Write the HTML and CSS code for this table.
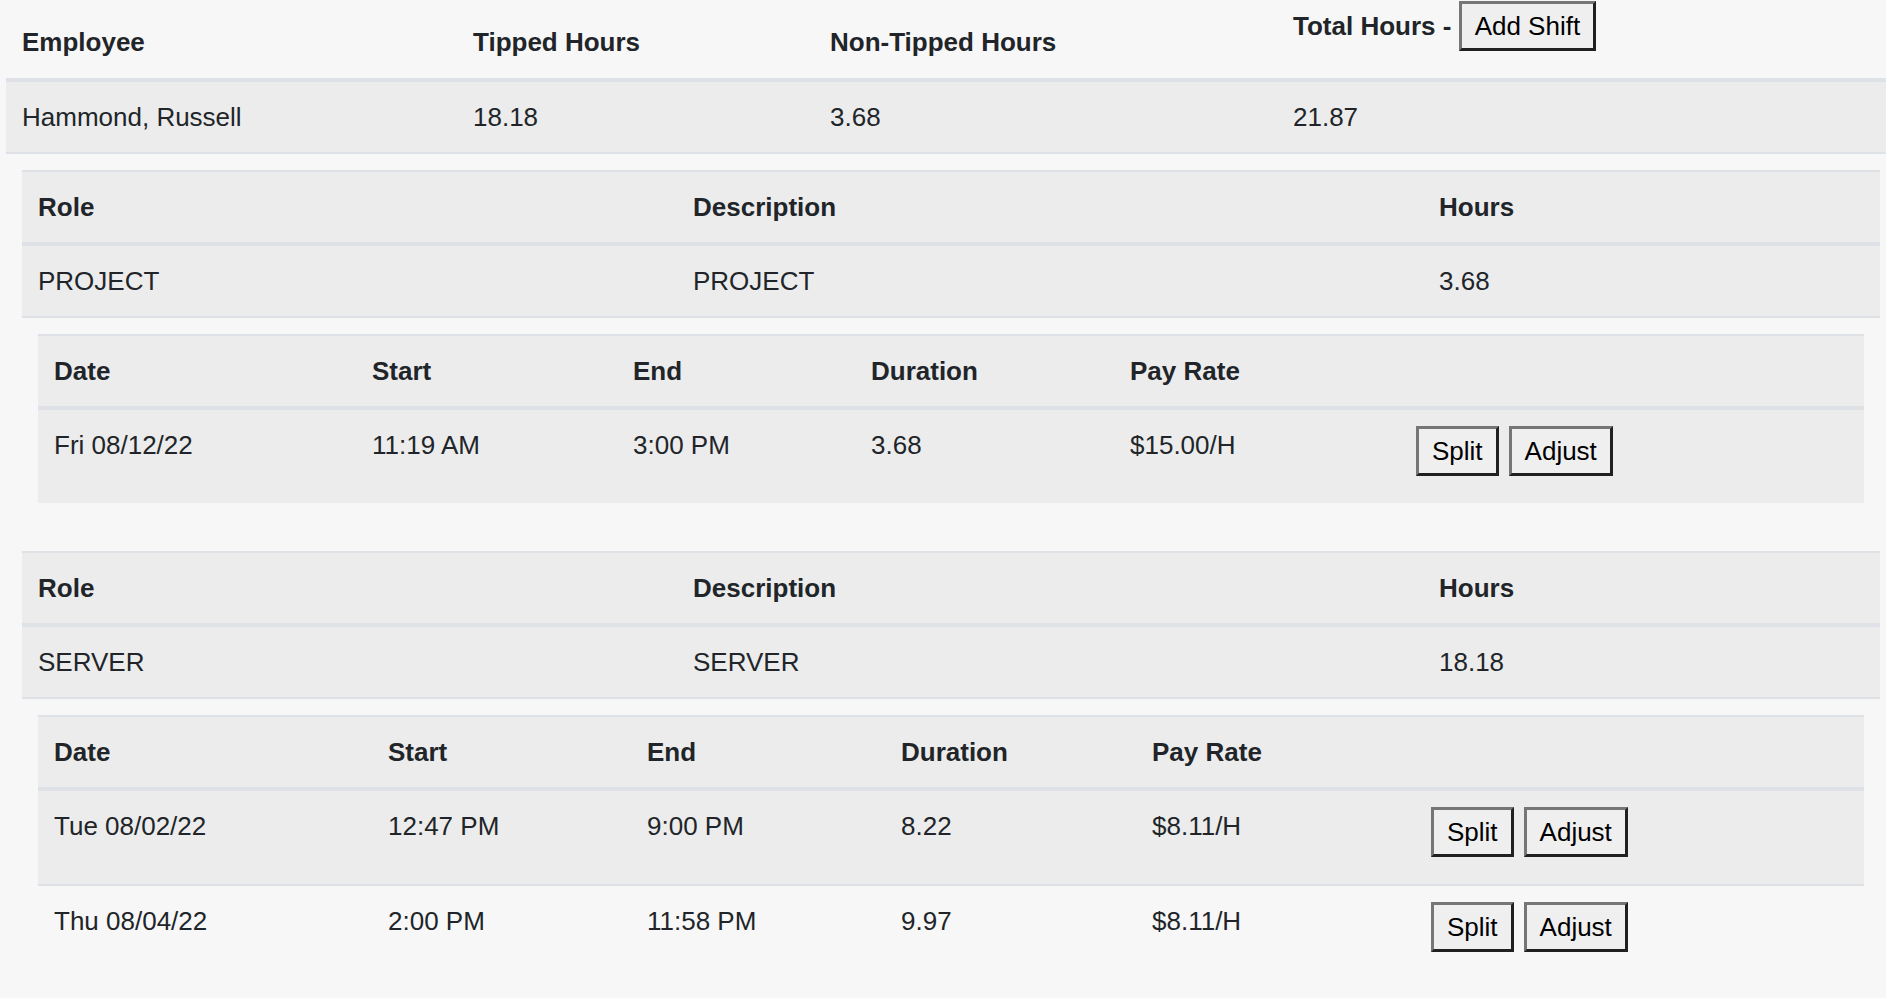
FILE: index.html
```html
<!DOCTYPE html>
<html lang="en">
<head>
<meta charset="utf-8">
<title>Employee Hours</title>
<link rel="stylesheet" href="styles.css">
</head>
<body>
<div class="page">
  <div class="tbl emp-table">
    <div class="row head main-cols">
      <div class="cell th">Employee</div>
      <div class="cell th">Tipped Hours</div>
      <div class="cell th">Non-Tipped Hours</div>
      <div class="cell th total-cell">Total Hours - <button class="btn inline-btn">Add Shift</button></div>
    </div>
    <div class="row stripe main-cols">
      <div class="cell">Hammond, Russell</div>
      <div class="cell">18.18</div>
      <div class="cell">3.68</div>
      <div class="cell">21.87</div>
    </div>
    <div class="row nest">
      <div class="tbl role-table">
        <div class="row head stripe role-cols">
          <div class="cell th">Role</div>
          <div class="cell th">Description</div>
          <div class="cell th">Hours</div>
        </div>
        <div class="row stripe role-cols">
          <div class="cell">PROJECT</div>
          <div class="cell">PROJECT</div>
          <div class="cell">3.68</div>
        </div>
        <div class="row nest">
          <div class="tbl shift-table">
            <div class="row head stripe shift-cols-a">
              <div class="cell th">Date</div>
              <div class="cell th">Start</div>
              <div class="cell th">End</div>
              <div class="cell th">Duration</div>
              <div class="cell th">Pay Rate</div>
              <div class="cell th"></div>
            </div>
            <div class="row stripe shift-cols-a">
              <div class="cell">Fri 08/12/22</div>
              <div class="cell">11:19 AM</div>
              <div class="cell">3:00 PM</div>
              <div class="cell">3.68</div>
              <div class="cell">$15.00/H</div>
              <div class="cell actions"><button class="btn">Split</button><button class="btn">Adjust</button></div>
            </div>
          </div>
        </div>
      </div>

      <div class="tbl role-table">
        <div class="row head stripe role-cols">
          <div class="cell th">Role</div>
          <div class="cell th">Description</div>
          <div class="cell th">Hours</div>
        </div>
        <div class="row stripe role-cols">
          <div class="cell">SERVER</div>
          <div class="cell">SERVER</div>
          <div class="cell">18.18</div>
        </div>
        <div class="row nest">
          <div class="tbl shift-table">
            <div class="row head stripe shift-cols-b">
              <div class="cell th">Date</div>
              <div class="cell th">Start</div>
              <div class="cell th">End</div>
              <div class="cell th">Duration</div>
              <div class="cell th">Pay Rate</div>
              <div class="cell th"></div>
            </div>
            <div class="row stripe shift-cols-b">
              <div class="cell">Tue 08/02/22</div>
              <div class="cell">12:47 PM</div>
              <div class="cell">9:00 PM</div>
              <div class="cell">8.22</div>
              <div class="cell">$8.11/H</div>
              <div class="cell actions"><button class="btn">Split</button><button class="btn">Adjust</button></div>
            </div>
            <div class="row shift-cols-b">
              <div class="cell">Thu 08/04/22</div>
              <div class="cell">2:00 PM</div>
              <div class="cell">11:58 PM</div>
              <div class="cell">9.97</div>
              <div class="cell">$8.11/H</div>
              <div class="cell actions"><button class="btn">Split</button><button class="btn">Adjust</button></div>
            </div>
          </div>
        </div>
      </div>
    </div>
  </div>
</div>
</body>
</html>
```

FILE: styles.css
```css
html, body {
  margin: 0;
  padding: 0;
  background: #f7f7f7;
  overflow: hidden;
}

body {
  font-family: "Liberation Sans", Arial, Helvetica, sans-serif;
  font-size: 26px;
  line-height: 39px;
  color: #212529;
}

.page {
  padding-left: 6px;
}

.emp-table {
  width: 1890px;
}

.row {
  display: grid;
  border-top: 2px solid #dee2e6;
}

.row.head {
  border-bottom: 4px solid #dee2e6;
  align-items: end;
}

.row.head + .row {
  border-top: 0;
}

.emp-table > .row.head {
  border-top: 0;
}

.emp-table > .row.head > .cell {
  padding-bottom: 16px;
}

.row.stripe {
  background: #ececec;
}

.cell {
  padding: 16px 16px 15px;
  white-space: nowrap;
}

.th {
  font-weight: bold;
}

.emp-table > .row.head > .total-cell {
  padding-top: 1px;
  padding-bottom: 15px;
}

.main-cols {
  grid-template-columns: 451px 357px 463px 619px;
}

.role-cols {
  grid-template-columns: 655px 746px 457px;
}

.shift-cols-a {
  grid-template-columns: 318px 261px 238px 259px 286px 464px;
}

.shift-cols-b {
  grid-template-columns: 334px 259px 254px 251px 279px 449px;
}

.row.nest {
  display: block;
  padding: 16px 16px 15px;
}

.role-table {
  margin-bottom: 33px;
}

.actions {
  display: flex;
  align-items: flex-start;
  gap: 10px;
}

.btn {
  font-family: "Liberation Sans", Arial, Helvetica, sans-serif;
  font-size: 26px;
  line-height: 30px;
  color: #000;
  background: #efefef;
  padding: 7px 13px;
  margin: 0 0 12px 0;
  border-width: 3px;
  border-style: solid;
  border-color: #767676 #202020 #202020 #767676;
  border-radius: 0;
}

.inline-btn {
  vertical-align: baseline;
}
```
